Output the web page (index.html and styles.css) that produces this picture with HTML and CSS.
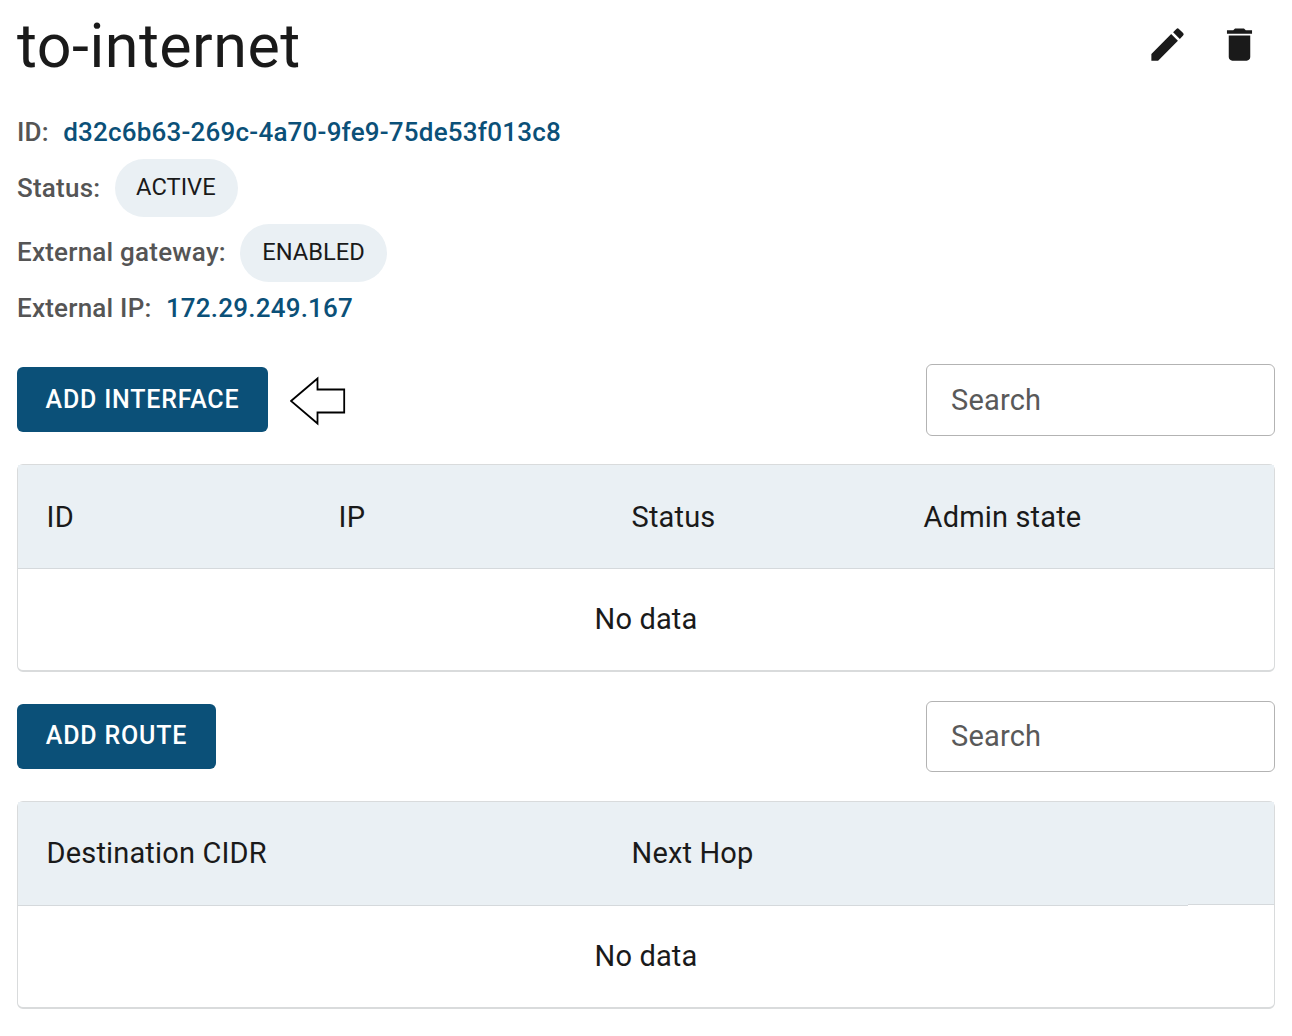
FILE: index.html
```html
<!DOCTYPE html>
<html lang="en">
<head>
<meta charset="utf-8">
<title>to-internet</title>
<link rel="stylesheet" href="styles.css">
</head>
<body>
<main class="page">
  <header class="header">
    <h1 class="title">to-internet</h1>
    <div class="actions">
      <button class="icon-button" aria-label="Edit"><svg viewBox="0 0 24 24"><path d="M3 17.25V21h3.75L17.81 9.94l-3.75-3.75L3 17.25zM20.71 7.04a1 1 0 0 0 0-1.41l-2.34-2.34a1 1 0 0 0-1.41 0l-1.83 1.83 3.75 3.75 1.83-1.83z"/></svg></button>
      <button class="icon-button" aria-label="Delete"><svg viewBox="0 0 24 24"><path d="M6 19c0 1.100.9 2 2 2h8c1.100 0 2-.9 2-2V7H6v12zM19 4h-3.500l-1-1h-5l-1 1H5v2h14V4z"/></svg></button>
    </div>
  </header>
  <div class="details">
    <div class="detail"><span class="label">ID:</span><a class="value">d32c6b63-269c-4a70-9fe9-75de53f013c8</a></div>
    <div class="detail detail-status"><span class="label">Status:</span><span class="chip chip-active">ACTIVE</span></div>
    <div class="detail detail-gateway"><span class="label">External gateway:</span><span class="chip chip-enabled">ENABLED</span></div>
    <div class="detail"><span class="label">External IP:</span><a class="value">172.29.249.167</a></div>
  </div>
  <section class="section section-interfaces">
    <div class="toolbar">
      <div class="toolbar-left">
        <button class="button button-interface">ADD INTERFACE</button>
        <svg class="arrow" viewBox="0 0 56 50"><path d="M1 25 27.500 2.500v11h26.700v23H27.500v11z"/></svg>
      </div>
      <div class="search">Search</div>
    </div>
    <div class="table">
      <div class="table-head interfaces"><span class="cell">ID</span><span class="cell">IP</span><span class="cell">Status</span><span class="cell">Admin state</span></div>
      <div class="table-empty">No data</div>
    </div>
  </section>
  <section class="section">
    <div class="toolbar">
      <button class="button button-route">ADD ROUTE</button>
      <div class="search search-short">Search</div>
    </div>
    <div class="table">
      <div class="table-head routes"><span class="cell">Destination CIDR</span><span class="cell">Next Hop</span><span class="cell cell-actions"></span></div>
      <div class="table-empty">No data</div>
    </div>
  </section>
</main>
</body>
</html>
```
FILE: styles.css
```css
* { box-sizing: border-box; }
body { margin: 0; background: #fff; color: #1a1a1a; font-family: Roboto, sans-serif; }
.page { padding: 0 17px; height: 1036px; overflow: hidden; }
.header { display: flex; justify-content: space-between; height: 106px; }
.title { margin: 11px 0 0; font-size: 61px; font-weight: 400; line-height: 70px; letter-spacing: 0.47px; white-space: nowrap; }
.actions { display: flex; gap: 29px; padding: 22.5px 14px 0 0; }
.icon-button { width: 43px; height: 43px; padding: 0; border: 0; background: none; }
.icon-button svg { display: block; width: 43px; height: 43px; fill: #1a1a1a; }
.detail { display: flex; align-items: center; height: 52px; font-size: 26px; font-weight: 500; white-space: nowrap; }
.detail-status { height: 58px; margin: 1px 0 7px; }
.detail-gateway { height: 58px; }
.detail-gateway .label { padding-bottom: 2px; }
.label { color: #555; letter-spacing: 0.22px; margin-right: 14.300px; }
.value { color: #0b5078; letter-spacing: 0.21px; }
.chip { display: flex; justify-content: center; align-items: center; height: 58px; padding: 0 0.5px 2px 0; border-radius: 29px; background: #eaf0f4; font-size: 23.700px; font-weight: 400; }
.chip-active { width: 123px; }
.chip-enabled { width: 147px; }
.section { margin-top: 29px; }
.section-interfaces { margin-top: 30px; }
.toolbar { display: flex; justify-content: space-between; align-items: flex-start; height: 72px; margin-bottom: 28px; }
.toolbar-left { display: flex; gap: 22px; }
.button { height: 65px; margin: 3px 0 0; padding: 0; border: 0; border-radius: 6px; background: #0b5078; color: #fff; font: 500 25px Roboto, sans-serif; letter-spacing: 0.8px; }
.button-interface { width: 251px; }
.button-route { width: 199px; padding-bottom: 2px; }
.arrow { width: 56px; height: 50px; margin-top: 12px; fill: #fff; stroke: #000; stroke-width: 1.800; }
.search { display: flex; align-items: center; width: 349px; height: 72px; padding-left: 24px; border: 1px solid #b3b3b3; border-radius: 6px; color: #595959; font-size: 29px; letter-spacing: 0.2px; }
.search-short { height: 71px; padding-bottom: 1px; }
.table { border: 1px solid #d9dbdc; border-bottom-width: 2px; border-radius: 6px; height: 208px; font-size: 29px; letter-spacing: 0.15px; }
.table-head { display: grid; height: 104px; }
.cell { display: flex; align-items: center; padding-left: 28.600px; border-bottom: 1px solid #d5d9dc; background: #eaf0f4; }
.interfaces { grid-template-columns: 292px 293px 292px 1fr; }
.routes { grid-template-columns: 585px 1fr 86px; }
.routes .cell { padding-bottom: 2px; }
.routes .cell-actions { height: 103px; }
.table-empty { display: flex; justify-content: center; align-items: center; height: 101px; padding-bottom: 2px; }
```
